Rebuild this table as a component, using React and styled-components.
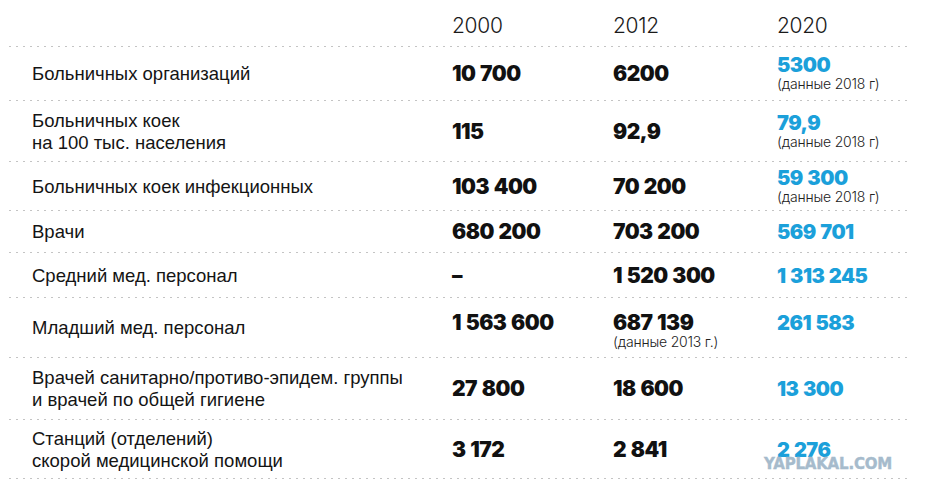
import React from "react";
import styled, { createGlobalStyle } from "styled-components";

const GlobalStyle = createGlobalStyle`
  body {
    margin: 0;
    background: #ffffff;
  }
`;

const rows = [
  { label: ["Больничных организаций"], h: 54, v2000: "10 700", v2012: "6200", v2020: "5300", note2020: "(данные 2018 г)" },
  { label: ["Больничных коек", "на 100 тыс. населения"], h: 61, v2000: "115", v2012: "92,9", v2020: "79,9", note2020: "(данные 2018 г)" },
  { label: ["Больничных коек инфекционных"], h: 49, v2000: "103 400", v2012: "70 200", v2020: "59 300", note2020: "(данные 2018 г)" },
  { label: ["Врачи"], h: 42, v2000: "680 200", v2012: "703 200", v2020: "569 701" },
  { label: ["Средний мед. персонал"], h: 45, v2000: "–", v2012: "1 520 300", v2020: "1 313 245" },
  { label: ["Младший мед. персонал"], h: 60, v2000: "1 563 600", v2012: "687 139", note2012: "(данные 2013 г.)", v2020: "261 583", top: true },
  { label: ["Врачей санитарно/противо-эпидем. группы", "и врачей по общей гигиене"], h: 62, v2000: "27 800", v2012: "18 600", v2020: "13 300" },
  { label: ["Станций (отделений)", "скорой медицинской помощи"], h: 59, v2000: "3 172", v2012: "2 841", v2020: "2 276" },
];

const Page = styled.div`
  position: relative;
  width: 903px;
  padding-left: 9px;
`;

const Row = styled.div`
  display: grid;
  grid-template-columns: 443px 161px 164px 135px;
  align-items: center;
  height: ${(p) => p.$h}px;
  background: linear-gradient(to right, #c4c4c4 2px, transparent 2px) 0 100% / 7px 1px repeat-x;
`;

const HeaderRow = styled(Row)`
  padding-top: 4px;
  box-sizing: border-box;
`;

const Year = styled.div`
  font-family: Inter, "Noto Sans", sans-serif;
  font-weight: 300;
  font-size: 21px;
  color: #1a1a1a;
  letter-spacing: -0.3px;
`;

const Label = styled.div`
  padding-left: 23px;
  font-family: "Liberation Sans", Arial, sans-serif;
  font-size: 18.5px;
  line-height: 22px;
  color: #141414;
`;

const Cell = styled.div`
  display: flex;
  flex-direction: column;
  align-self: ${(p) => (p.$top ? "start" : "center")};
  padding-top: ${(p) => (p.$top ? "16px" : "0")};
`;

const Value = styled.div`
  font-family: Inter, "Noto Sans", sans-serif;
  font-weight: 900;
  font-size: ${(p) => (p.$blue ? "20px" : "21px")};
  line-height: 18px;
  letter-spacing: -0.5px;
  word-spacing: 1px;
  color: ${(p) => (p.$blue ? "#1ba0da" : "#111111")};
`;

const Note = styled.div`
  margin-top: 2px;
  font-family: Inter, "Noto Sans", sans-serif;
  font-weight: 300;
  font-size: 14px;
  line-height: 16px;
  color: #222222;
  letter-spacing: -0.2px;
`;

const Watermark = styled.div`
  position: absolute;
  left: 764px;
  top: 459px;
  font-family: "DejaVu Sans", sans-serif;
  font-weight: 700;
  font-size: 15px;
  line-height: 11px;
  letter-spacing: -0.2px;
  color: #a6bbcc;
  -webkit-text-stroke: 0.4px #a6bbcc;
`;

export default function App() {
  return (
    <>
      <GlobalStyle />
      <Page>
        <HeaderRow $h={47}>
          <div />
          <Year>2000</Year>
          <Year>2012</Year>
          <Year>2020</Year>
        </HeaderRow>
        {rows.map((r) => (
          <Row key={r.label.join(" ")} $h={r.h}>
            <Label>
              {r.label.map((l) => (
                <div key={l}>{l}</div>
              ))}
            </Label>
            <Cell $top={r.top}>
              <Value>{r.v2000}</Value>
            </Cell>
            <Cell $top={r.top}>
              <Value>{r.v2012}</Value>
              {r.note2012 && <Note>{r.note2012}</Note>}
            </Cell>
            <Cell $top={r.top}>
              <Value $blue>{r.v2020}</Value>
              {r.note2020 && <Note>{r.note2020}</Note>}
            </Cell>
          </Row>
        ))}
        <Watermark>YAPLAKAL.COM</Watermark>
      </Page>
    </>
  );
}
